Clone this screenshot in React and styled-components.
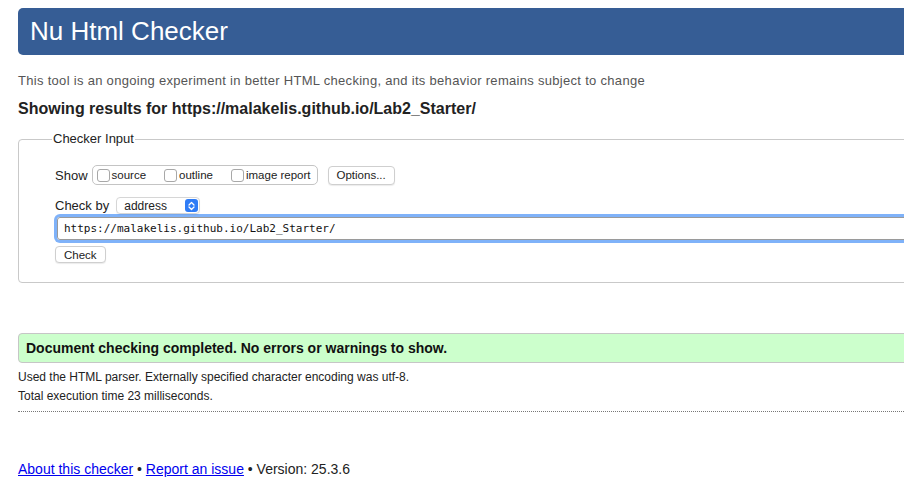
import React from "react";
import styled, { createGlobalStyle } from "styled-components";

const GlobalStyle = createGlobalStyle`
  html, body {
    margin: 0;
    padding: 0;
    overflow: hidden;
    background: #ffffff;
  }
  body {
    font-family: "Liberation Sans", Arial, Helvetica, sans-serif;
    color: #222222;
  }
`;

const Page = styled.div`
  width: 1100px;
  padding: 8px 0 0 18px;
`;

const Header = styled.h1`
  margin: 0;
  height: 47px;
  line-height: 46px;
  padding-left: 12px;
  background: #365d95;
  color: #ffffff;
  font-size: 26px;
  font-weight: normal;
  border-radius: 5px;
`;

const Intro = styled.p`
  margin: 18px 0 0;
  font-size: 13px;
  letter-spacing: 0.3px;
  line-height: 16px;
  color: #555555;
`;

const Results = styled.h2`
  margin: 10px 0 0;
  font-size: 16px;
  line-height: 19px;
  font-weight: bold;
  color: #222222;
`;

const Fieldset = styled.fieldset`
  margin: 13px 0 0;
  padding: 18px 36px 19px 36px;
  border: 1px solid #c9c9c9;
  border-radius: 4px;
  min-width: 0;
`;

const Legend = styled.legend`
  margin-left: -3px;
  padding: 0 1px;
  font-size: 13px;
  line-height: 16px;
  color: #222222;
`;

const Row = styled.div`
  display: flex;
  align-items: center;
  gap: ${(p) => p.$gap || 4}px;
  margin-top: ${(p) => p.$top || 0}px;
  font-size: 13px;
  color: #222222;
`;

const Toggles = styled.div`
  display: flex;
  align-items: center;
  height: 18px;
  padding: 0 6px 0 4px;
  border: 1px solid #c4c4c4;
  border-radius: 5px;
  gap: 18px;
`;

const Toggle = styled.label`
  display: flex;
  align-items: center;
  gap: 2px;
  font-size: 11.5px;
  color: #222222;
`;

const Box = styled.span`
  width: 11px;
  height: 11px;
  border: 1px solid #a8a8a8;
  border-radius: 3px;
  background: #ffffff;
`;

const Button = styled.button`
  font-family: "Liberation Sans", Arial, sans-serif;
  font-size: 11.5px;
  height: ${(p) => p.$h || 19}px;
  padding: 0 ${(p) => p.$pad || 9}px;
  margin-left: ${(p) => p.$left || 0}px;
  background: #ffffff;
  color: #222222;
  border: 1px solid #cfcfcf;
  border-radius: 4px;
  box-shadow: 0 1px 1px rgba(0, 0, 0, 0.08);
`;

const Select = styled.div`
  display: flex;
  align-items: center;
  justify-content: space-between;
  width: 84px;
  height: 17px;
  box-sizing: border-box;
  padding: 0 1px 0 7px;
  border: 1px solid #d6d6d6;
  border-radius: 4px;
  font-size: 12px;
  box-shadow: 0 1px 1px rgba(0, 0, 0, 0.06);
`;

const Stepper = styled.span`
  display: flex;
  align-items: center;
  justify-content: center;
  width: 13px;
  height: 13px;
  border-radius: 3px;
  background: #2f7cf6;
`;

const UrlInput = styled.div`
  margin: 3px 0 0 2px;
  height: 21px;
  line-height: 21px;
  padding-left: 6px;
  border: 1px solid #9a9a9a;
  border-radius: 3px;
  box-shadow: 0 0 0 3px #7fb2f9;
  font-family: "DejaVu Sans Mono", "Liberation Mono", monospace;
  font-size: 11px;
  color: #111111;
`;

const Success = styled.div`
  margin-top: 50px;
  height: 28px;
  line-height: 29px;
  padding-left: 7px;
  background: #ccffcc;
  border: 1px solid #c6c6c6;
  border-radius: 4px;
  font-size: 14px;
  font-weight: bold;
  color: #111111;
`;

const Details = styled.div`
  padding-top: 5px;
  padding-bottom: 5px;
  border-bottom: 1px dotted #777777;
  font-size: 12px;
  line-height: 19px;
  color: #222222;
`;

const Footer = styled.p`
  margin: 48px 0 0;
  font-size: 14px;
  line-height: 18px;
  color: #222222;
  a {
    color: #0000ee;
    text-decoration: underline;
  }
`;

const App = () => {
  return (
    <>
      <GlobalStyle />
      <Page>
        <Header>Nu Html Checker</Header>
        <Intro>
          This tool is an ongoing experiment in better HTML checking, and its
          behavior remains subject to change
        </Intro>
        <Results>Showing results for https://malakelis.github.io/Lab2_Starter/</Results>

        <Fieldset>
          <Legend>Checker Input</Legend>
          <Row $gap={4}>
            <span>Show</span>
            <Toggles>
              <Toggle>
                <Box />
                source
              </Toggle>
              <Toggle>
                <Box />
                outline
              </Toggle>
              <Toggle>
                <Box />
                image report
              </Toggle>
            </Toggles>
            <Button $left={6} $pad={8}>Options...</Button>
          </Row>
          <Row $top={12} $gap={7}>
            <span>Check by</span>
            <Select>
              <span>address</span>
              <Stepper>
                <svg width="7" height="10" viewBox="0 0 7 10">
                  <path d="M1 4 L3.5 1.5 L6 4 M1 6 L3.5 8.5 L6 6" fill="none" stroke="#fff" strokeWidth="1.3" strokeLinecap="round" strokeLinejoin="round" />
                </svg>
              </Stepper>
            </Select>
          </Row>
          <UrlInput>https://malakelis.github.io/Lab2_Starter/</UrlInput>
          <Row $top={6}>
            <Button $h={17} $pad={8}>Check</Button>
          </Row>
        </Fieldset>

        <Success>Document checking completed. No errors or warnings to show.</Success>
        <Details>
          <div>Used the HTML parser. Externally specified character encoding was utf-8.</div>
          <div>Total execution time 23 milliseconds.</div>
        </Details>

        <Footer>
          <a href="#about">About this checker</a> • <a href="#issue">Report an issue</a> • Version: 25.3.6
        </Footer>
      </Page>
    </>
  );
};

export default App;
